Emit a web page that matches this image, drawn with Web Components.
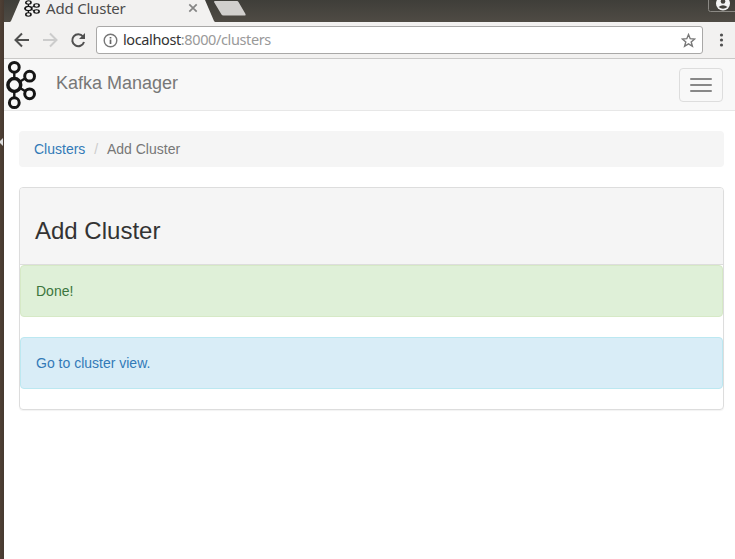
<!DOCTYPE html>
<html lang="en"><head><meta charset="utf-8"><title>Add Cluster</title>
<style>
html,body{margin:0;height:100%;background:#fff}
body{font:14px/20px "Liberation Sans",Arial,sans-serif;color:#333}
</style></head><body>
<app-window>
  <tab-strip slot="chrome">Add Cluster</tab-strip>
  <browser-toolbar slot="chrome"><span slot="host">localhost</span><span slot="path">:8000/clusters</span></browser-toolbar>
  <nav-bar>Kafka Manager</nav-bar>
  <page-content>
    <bread-crumb><a slot="parent">Clusters</a>Add Cluster</bread-crumb>
    <content-panel><span slot="title">Add Cluster</span>
      <alert-box kind="success">Done!</alert-box>
      <alert-box kind="info">Go to cluster view.</alert-box>
    </content-panel>
  </page-content>
</app-window>
<script>
function define(name, html){
  const t=document.createElement('template'); t.innerHTML=html;
  customElements.define(name, class extends HTMLElement{
    constructor(){super();this.attachShadow({mode:'open'}).append(t.content.cloneNode(true));}
  });
}
define('kafka-logo',`<style>:host{display:block;flex:none}svg{display:block;width:100%;height:100%}</style>
<svg viewBox="0 0 32 50" preserveAspectRatio="none" fill="none" stroke="#151515" stroke-width="3"><path d="M8.3 12v8M8.3 30v8M14 21.5l5-3M14 28l5 3" stroke-width="2.4"/><circle cx="8.3" cy="7.3" r="4.9"/><circle cx="8.3" cy="25" r="6.4" stroke-width="3.5"/><circle cx="8.3" cy="42.7" r="4.9"/><circle cx="23.6" cy="16.2" r="4.9"/><circle cx="23.6" cy="33.8" r="4.9"/></svg>`);
define('app-window',`<style>:host{display:grid;grid-template-columns:4px 1fr;height:559px}
.launcher{background:linear-gradient(90deg,#4f4035,#463930);display:flex}.launcher svg{margin-top:138px;width:4px;height:8px}
main{display:flex;flex-direction:column;min-width:0}</style>
<div class="launcher"><svg viewBox="0 0 4 8"><path d="M3 0v8L-1 4z" fill="#ddd"/></svg></div><main><slot name="chrome"></slot><slot></slot></main>`);
define('tab-strip',`<style>:host{display:grid;height:22px;flex:none;font:15px/16px "Noto Sans",sans-serif;color:#4c4c4c;background:linear-gradient(#3f3e39,#4f4b44)}
.bg,.row{grid-area:1/1;min-width:0}.row{display:flex;height:22px}
kafka-logo{width:17px;height:17px;margin:-.5px 0 0 20px}
.t{width:142px;margin-left:5px;letter-spacing:-.2px;white-space:nowrap}
.x{width:10px;height:10px;margin-top:3px}.u{margin-left:auto;width:27px;height:13px}</style>
<svg class="bg" width="731" height="22"><path d="M6 22L7 21L16 0H201L210 21L211 22Z" fill="#f2f1f0"/><path d="M210.500 1H233Q234 1 234.500 2L241.500 14Q242 15.500 241 15.500H219.500Q218 15.500 217.500 14.500L210 2Z" fill="#d1cfcd"/></svg>
<div class="row"><kafka-logo></kafka-logo><span class="t"><slot></slot></span>
<svg class="x" viewBox="0 0 10 10"><path d="M1.300 1.300l7.400 7.400M8.700 1.300l-7.400 7.400" stroke="#858585" stroke-width="1.700"/></svg>
<svg class="u" viewBox="0 0 27 13"><path d="M.5 -1V9.500Q.5 11.500 2.500 11.500H28" fill="#45433e" stroke="#8b8984"/><circle cx="15" cy="3.500" r="7" fill="#f4f4f4"/><circle cx="15" cy="1.500" r="2.300" fill="#44423d"/><path d="M10.500 7Q15 3.500 19.500 7Q15 10.500 10.500 7" fill="#44423d"/></svg></div>`);
define('browser-toolbar',`<style>:host{display:flex;align-items:center;height:36px;box-sizing:border-box;flex:none;background:#f2f1f0;padding:0 0 0 10px;font:14.5px/20px "Noto Sans",sans-serif}
svg{flex:none}.i{margin-right:12px}
.box{display:flex;align-items:center;box-sizing:border-box;width:607px;height:28px;border:1px solid #a9a8a7;border-radius:3px;background:#fff;padding:0 6px;margin-left:-2px}
.url{flex:1;margin:-2px 0 0 5px;letter-spacing:-.38px;color:#999;white-space:nowrap}.h{color:#333}.m{margin-left:16px}</style>
<svg class="i" width="16" height="16" viewBox="0 0 16 16" fill="none" stroke="#505050" stroke-width="2"><path d="M15 8H2M8 1.500L1.500 8L8 14.500"/></svg>
<svg class="i" width="16" height="16" viewBox="0 0 16 16" fill="none" stroke="#ccc" stroke-width="2"><path d="M1 8H14M8 1.500L14.500 8L8 14.500"/></svg>
<svg class="i" width="16" height="16" viewBox="0 0 16 16"><path d="M13 4.500A6 6 0 1 0 14 10" fill="none" stroke="#505050" stroke-width="2"/><path d="M15 1V7H9Z" fill="#505050"/></svg>
<div class="box"><svg width="15" height="15" viewBox="0 0 15 15"><circle cx="7.500" cy="7.500" r="6.300" fill="none" stroke="#777" stroke-width="1.400"/><path d="M7.500 6.500V11M7.500 4V5.500" stroke="#666" stroke-width="1.700"/></svg>
<span class="url"><span class="h"><slot name="host"></slot></span><slot name="path"></slot></span>
<svg width="15" height="15" viewBox="0 0 15 15"><path d="M7.500 1.600L9.200 5.700L13.700 6L10.200 8.900L11.400 13.300L7.500 10.900L3.600 13.300L4.800 8.900L1.300 6L5.800 5.700Z" fill="none" stroke="#777" stroke-width="1.400"/></svg></div>
<svg class="m" width="6" height="16" viewBox="0 0 6 16" fill="#505050"><circle cx="2.500" cy="3" r="1.600"/><circle cx="2.500" cy="8" r="1.600"/><circle cx="2.500" cy="13" r="1.600"/></svg>`);
define('nav-bar',`<style>:host{display:flex;align-items:center;box-sizing:border-box;height:53px;flex:none;background:#f8f8f8;border-top:1px solid #c9c8c7;border-bottom:1px solid #e7e7e7;font-size:18px;color:#777}
kafka-logo{width:32px;height:50px;margin-left:2px}.b{margin-left:18px;margin-top:-4px}
.t{margin:1px 12px 0 auto;box-sizing:border-box;width:44px;height:34px;border:1px solid #ddd;border-radius:4px;display:flex;flex-direction:column;align-items:center;justify-content:center;gap:4px}i{width:22px;height:2px;border-radius:1px;background:#888}</style>
<kafka-logo></kafka-logo><span class="b"><slot></slot></span><div class="t"><i></i><i></i><i></i></div>`);
define('page-content',`<style>:host{display:block;padding:20px 11px 0 15px}</style><slot></slot>`);
define('bread-crumb',`<style>:host{display:flex;height:36px;box-sizing:border-box;padding:8px 15px;margin-bottom:20px;background:#f5f5f5;border-radius:4px;color:#777}::slotted(a){color:#337ab7}i{font-style:normal;color:#ccc;padding:0 9px 0 9px;margin-right:-.3px}</style><slot name="parent"></slot><i>/</i><span><slot></slot></span>`);
define('content-panel',`<style>:host{display:block;border:1px solid #ddd;border-radius:4px;box-shadow:0 1px 1px rgba(0,0,0,.05)}
header{background:#f5f5f5;border-bottom:1px solid #ddd;padding:10px 15px;border-radius:3px 3px 0 0}h3{font-size:24px;line-height:26px;font-weight:500;margin:20px 0 10px}</style><header><h3><slot name="title"></slot></h3></header><slot></slot>`);
define('alert-box',`<style>:host{display:block;padding:15px;border:1px solid;border-radius:4px;margin-bottom:20px}:host([kind=success]){color:#3c763d;background:#dff0d8;border-color:#d6e9c6}:host([kind=info]){color:#337ab7;background:#d9edf7;border-color:#bce8f1}</style><slot></slot>`);
</script></body></html>
